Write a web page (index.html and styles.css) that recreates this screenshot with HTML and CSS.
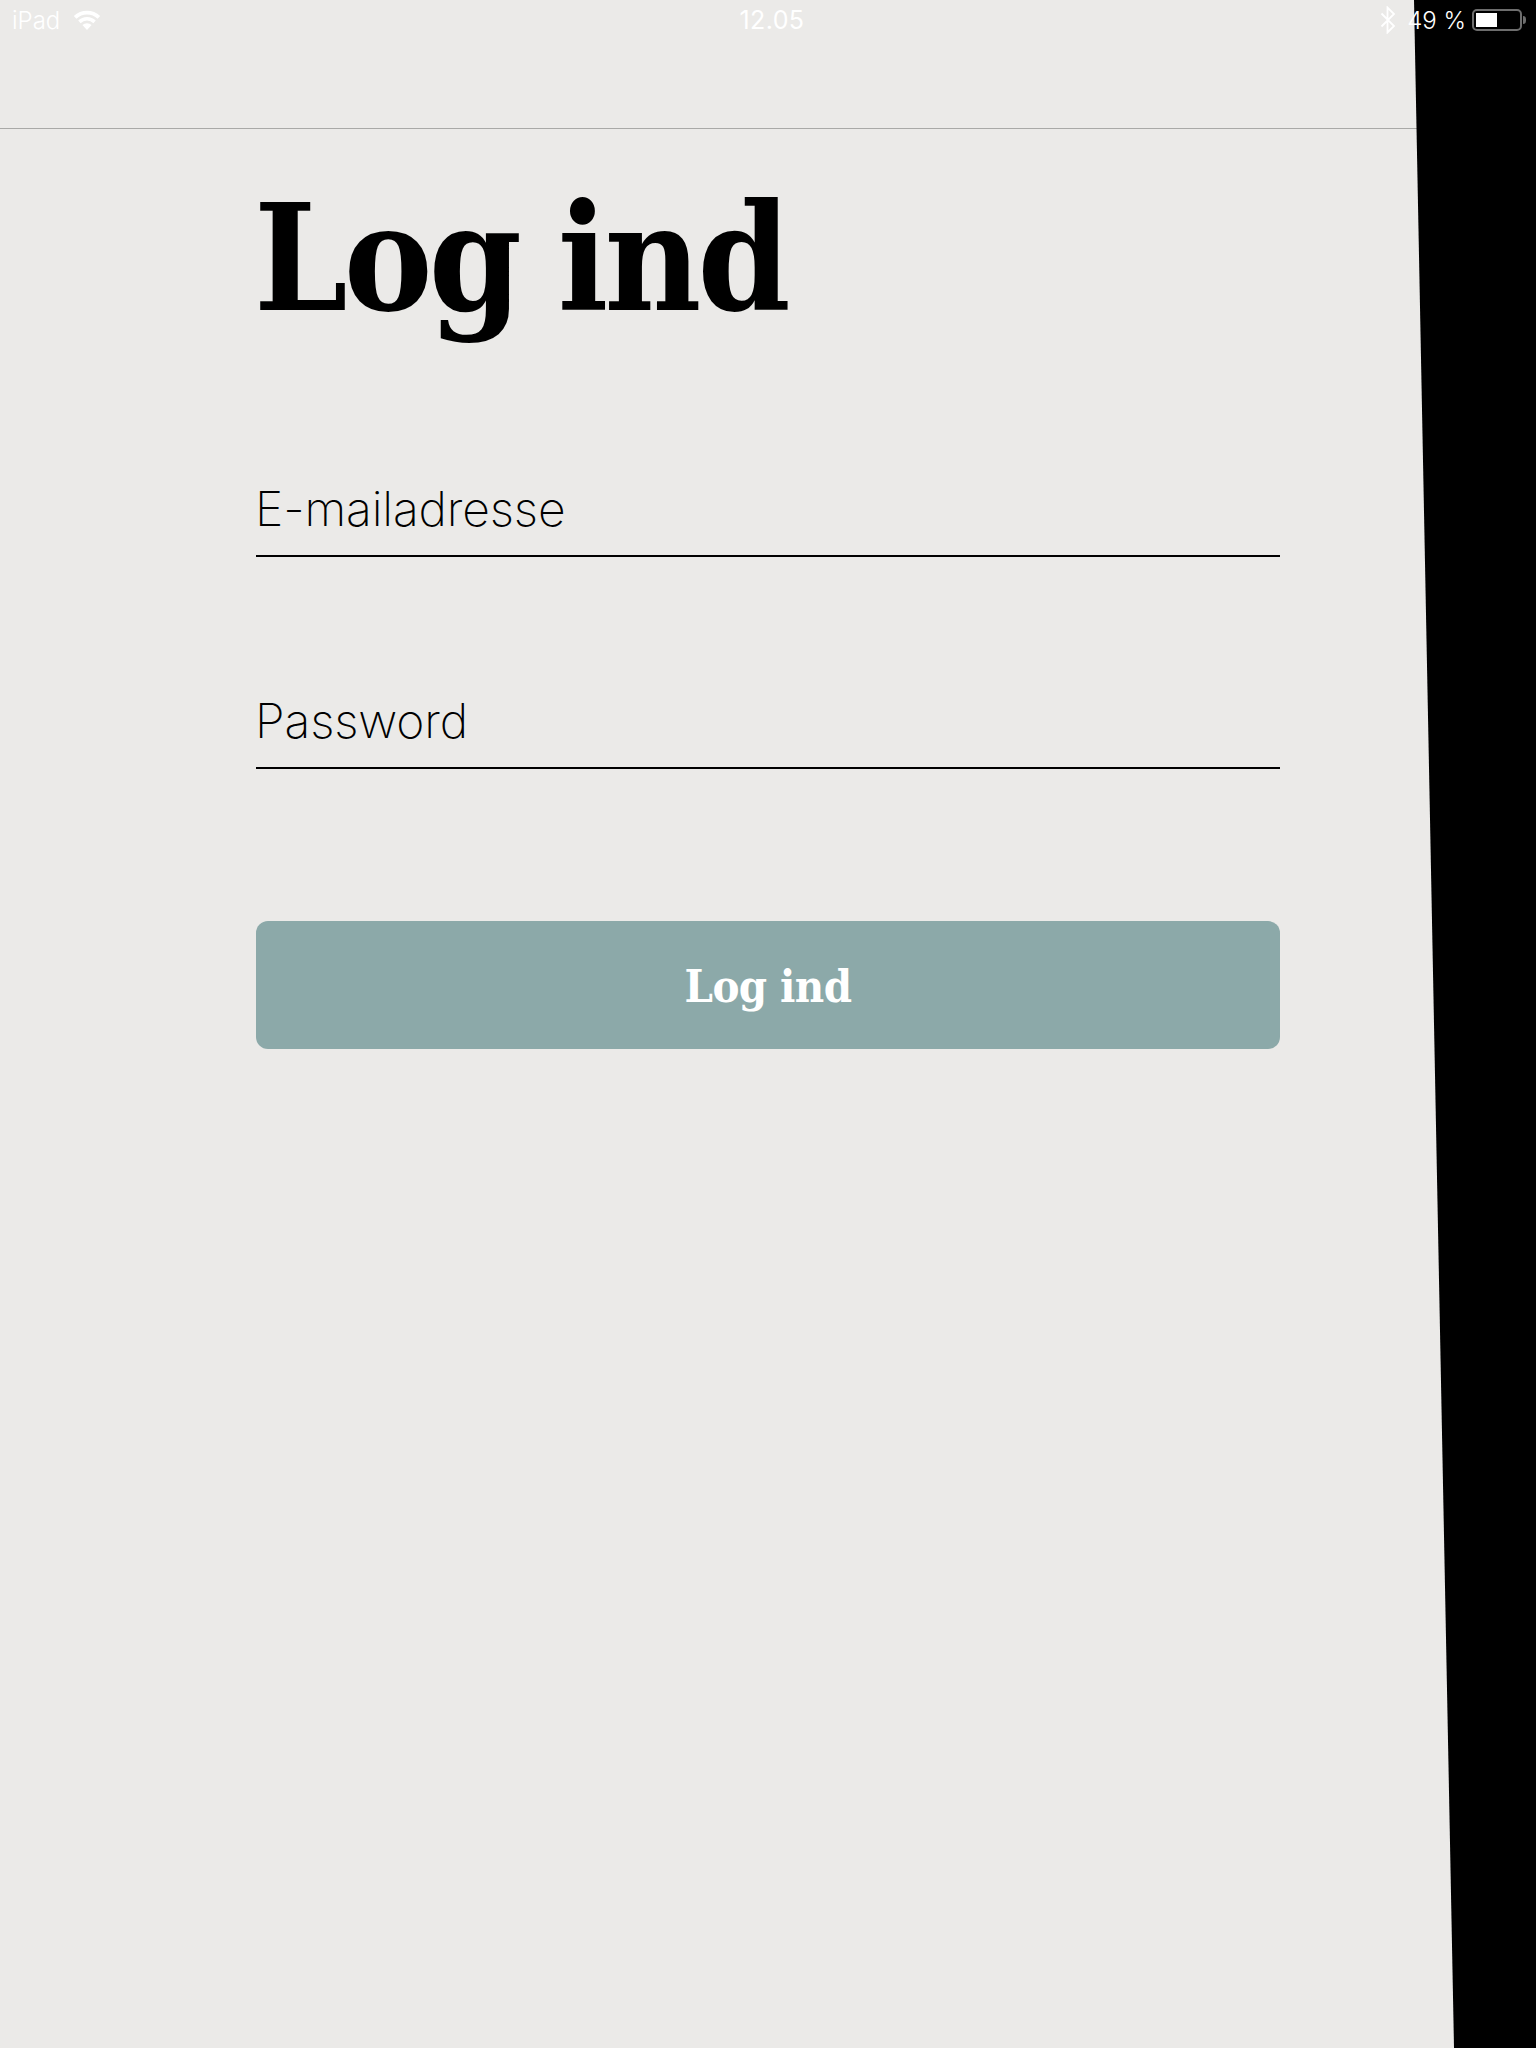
FILE: index.html
```html
<!DOCTYPE html>
<html lang="da">
<head>
<meta charset="utf-8">
<title>Log ind</title>
<link rel="stylesheet" href="styles.css">
</head>
<body>
<div class="page">
  <div class="wedge"></div>
  <header class="status">
    <div class="status-left">
      <span class="carrier">iPad</span>
      <svg class="wifi" viewBox="0 0 28 20" width="28" height="20" aria-hidden="true">
        <path fill="#fff" d="M14 20l-4.600-4.900a6.600 6.600 0 0 1 9.200 0zM7.600 13.200L5.200 10.600a12.600 12.600 0 0 1 17.600 0l-2.400 2.600a9.200 9.200 0 0 0-12.800 0zM3.400 8.700L.8 6a19 19 0 0 1 26.400 0l-2.600 2.700a15.300 15.300 0 0 0-21.200 0z"/>
      </svg>
    </div>
    <span class="time">12.05</span>
    <div class="status-right">
      <svg class="bt" viewBox="0 0 16 28" width="16" height="28" aria-hidden="true">
        <path fill="none" stroke="#fff" stroke-width="1.800" d="M1.500 7.500L14 20l-6.500 6.500v-25L14 8 1.500 20.500"/>
      </svg>
      <span class="pct">49 %</span>
      <div class="battery"><div class="battery-fill"></div></div>
      <div class="battery-nub"></div>
    </div>
  </header>
  <nav class="navbar"></nav>
  <main class="content">
    <h1 class="title">Log ind</h1>
    <form class="form">
      <label class="field"><span class="placeholder">E-mailadresse</span></label>
      <label class="field"><span class="placeholder">Password</span></label>
      <button class="submit" type="button">Log ind</button>
    </form>
  </main>
</div>
</body>
</html>
```
FILE: styles.css
```css
* { box-sizing: border-box; }
html, body { margin: 0; padding: 0; }
body { background: #ebeae8; }
.page {
  position: relative;
  width: 1536px;
  height: 2048px;
  overflow: hidden;
  background: #ebeae8;
  font-family: Inter, Roboto, sans-serif;
  color: #000;
}
.wedge {
  position: absolute;
  inset: 0;
  background: #000;
  clip-path: polygon(1414px 0, 1536px 0, 1536px 2048px, 1454px 2048px);
  z-index: 1;
}
.status {
  position: relative;
  z-index: 2;
  height: 40px;
  display: flex;
  align-items: center;
  justify-content: space-between;
  padding: 0 10px 0 12px;
  color: #fff;
  font-size: 24px;
  font-weight: 300;
}
.status-left, .status-right { display: flex; align-items: center; width: 300px; }
.status-right { justify-content: flex-end; }
.carrier { margin-right: 13px; }
.time { font-weight: 400; font-size: 25px; letter-spacing: 0.400px; margin-left: 6px; }
.pct { margin: 0 6px 0 11px; }
.battery {
  width: 50px;
  height: 22px;
  border: 2px solid #6d6d6d;
  border-radius: 5px;
  padding: 2px;
}
.battery-fill { width: 49%; height: 100%; background: #fff; }
.battery-nub {
  width: 3px;
  height: 8px;
  margin-left: 1px;
  background: #6d6d6d;
  border-radius: 0 3px 3px 0;
}
.navbar {
  height: 89px;
  border-bottom: 1px solid #a9a9a7;
}
.content { padding: 45px 0 0 256px; width: 1280px; }
.title {
  margin: 0 0 0 -2px;
  font-family: "DejaVu Serif", serif;
  font-stretch: condensed;
  font-weight: 700;
  font-size: 148px;
  line-height: 168px;
  letter-spacing: -3.800px;
  word-spacing: -3px;
}
.form { display: flex; flex-direction: column; margin-top: 141px; }
.field {
  display: flex;
  align-items: flex-end;
  height: 74px;
  padding-bottom: 16px;
  border-bottom: 2px solid #000;
  margin-bottom: 138px;
  font-size: 48px;
  font-weight: 250;
  line-height: 60px;
  letter-spacing: -0.150px;
}
.placeholder { margin-left: -1px; }
.field + .field { margin-bottom: 152px; }
.submit {
  height: 128px;
  border: 0;
  border-radius: 12px;
  background: #8ca9a9;
  color: #fff;
  font-family: "DejaVu Serif", serif;
  font-stretch: condensed;
  font-weight: 700;
  font-size: 45px;
  letter-spacing: -0.600px;
  padding: 2px 0 0;
}
```
